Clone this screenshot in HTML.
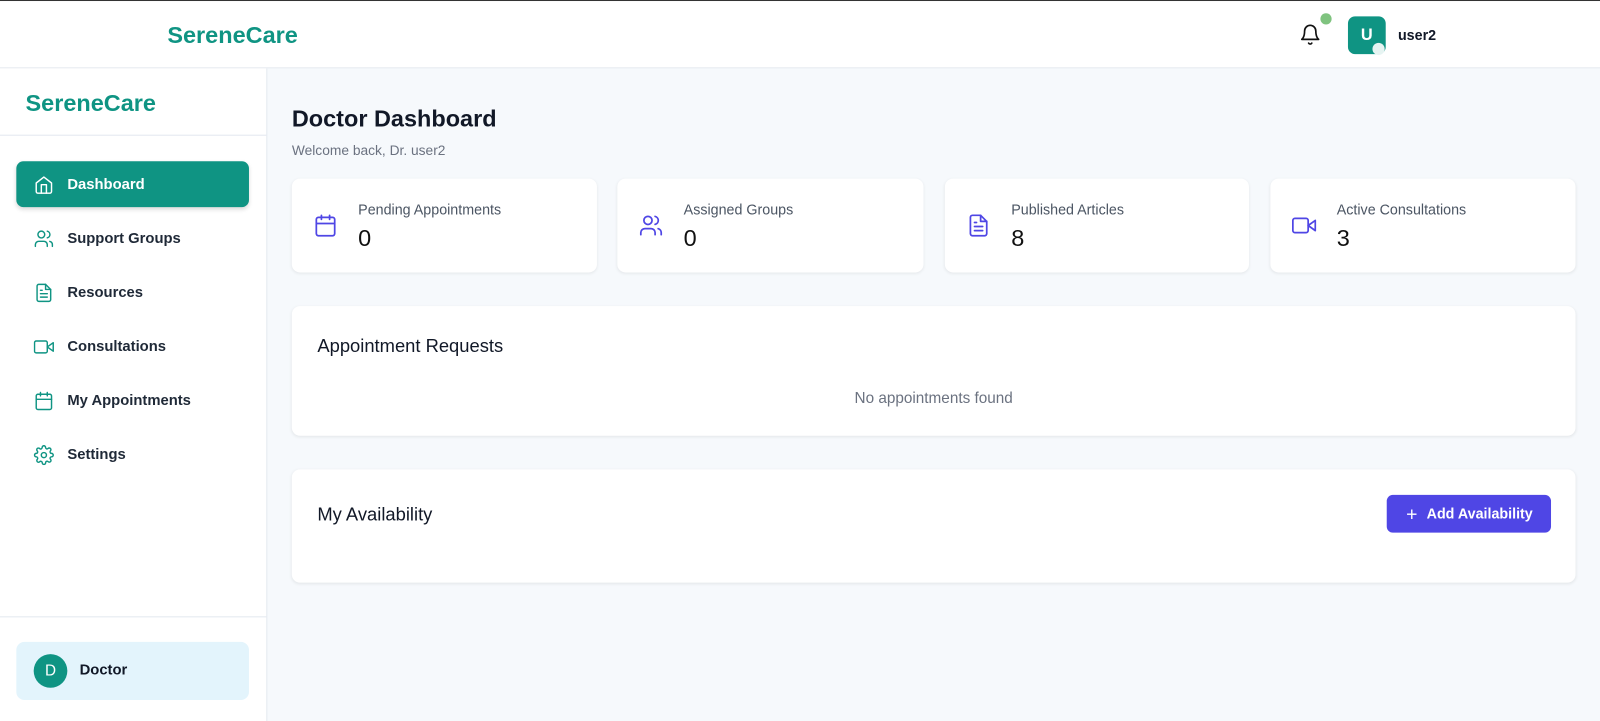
<!DOCTYPE html>
<html><head><meta charset="utf-8"><style>
*{box-sizing:border-box;margin:0;padding:0}
html,body{width:1600px;height:721px;overflow:hidden;background:#f6f9fc}
body{font-family:"Liberation Sans",sans-serif;color:#111827}
#w{position:absolute;left:0;top:0;width:1568px;height:707px;transform:scale(1.020408);transform-origin:0 0}
.top{position:absolute;left:0;top:0;width:1568px;height:67px;background:#fff;border-top:1px solid #333;border-bottom:1px solid #e3e8ef}
.logo{color:#0f9483;font-weight:bold;font-size:23px;position:absolute}
.side{position:absolute;left:0;top:67px;width:262px;height:640px;background:#fff;border-right:1px solid #e3e8ef}
.nav{position:absolute;left:16px;width:228px;height:45px;border-radius:7px;display:flex;align-items:center;padding-left:17px;font-size:14.5px;font-weight:bold;color:#1f2937}
.nav svg{width:20px;height:20px;margin-right:13px;fill:none;stroke:#0f9483;stroke-width:1.7;stroke-linecap:round;stroke-linejoin:round}
.nav.act{background:#0f9483;color:#fff;box-shadow:0 2px 4px rgba(0,0,0,.15)}
.nav.act svg{stroke:#fff}
.card{position:absolute;background:#fff;border-radius:8px;box-shadow:0 1px 3px rgba(0,0,0,.08)}
.stat{top:175px;height:92px;width:299px}
.stat svg{position:absolute;left:21px;top:34px;width:24px;height:24px;fill:none;stroke:#4f46e5;stroke-width:1.7;stroke-linecap:round;stroke-linejoin:round}
.stat .l{position:absolute;left:65px;top:22px;font-size:14px;color:#4b5563}
.stat .v{position:absolute;left:65px;top:45px;font-size:23px;color:#111}
h3{font-size:18px;font-weight:normal;color:#111827;position:absolute;left:25px}
</style></head><body><div id="w">
<div class="top">
<div class="logo" style="left:164px;top:20px">SereneCare</div>
<svg style="position:absolute;left:1273px;top:21px" width="22" height="24" viewBox="0 0 24 24" fill="none" stroke="#111" stroke-width="1.8" stroke-linecap="round" stroke-linejoin="round"><path d="M6 8a6 6 0 0 1 12 0c0 7 3 9 3 9H3s3-2 3-9"/><path d="M10.3 21a1.94 1.94 0 0 0 3.4 0"/></svg>
<div style="position:absolute;left:1294px;top:12px;width:11px;height:11px;border-radius:50%;background:#7fc37f"></div>
<div style="position:absolute;left:1321px;top:15px;width:37px;height:37px;border-radius:7px;background:#0f9483;color:#fff;font-weight:bold;font-size:16px;text-align:center;line-height:37px">U</div>
<div style="position:absolute;left:1345px;top:41px;width:12px;height:12px;border-radius:50%;background:#e6f4f2"></div>
<div style="position:absolute;left:1370px;top:25px;font-size:14px;font-weight:bold">user2</div>
</div>
<div class="side">
<div class="logo" style="left:25px;top:21px;font-size:23px">SereneCare</div>
<div style="position:absolute;left:0;top:65px;width:261px;border-top:1px solid #e3e8ef"></div>
<div class="nav act" style="top:91px"><svg viewBox="0 0 24 24"><path d="M3 10l9-7 9 7v10a2 2 0 0 1-2 2H5a2 2 0 0 1-2-2z"/><path d="M9 22V12h6v10"/></svg>Dashboard</div>
<div class="nav" style="top:144px"><svg viewBox="0 0 24 24"><path d="M16 21v-2a4 4 0 0 0-4-4H6a4 4 0 0 0-4 4v2"/><circle cx="9" cy="7" r="4"/><path d="M22 21v-2a4 4 0 0 0-3-3.9M16 3.1a4 4 0 0 1 0 7.8"/></svg>Support Groups</div>
<div class="nav" style="top:197px"><svg viewBox="0 0 24 24"><path d="M14 2H6a2 2 0 0 0-2 2v16a2 2 0 0 0 2 2h12a2 2 0 0 0 2-2V8z"/><path d="M14 2v6h6M16 13H8M16 17H8M10 9H8"/></svg>Resources</div>
<div class="nav" style="top:250px"><svg viewBox="0 0 24 24"><path d="M23 7l-7 5 7 5z"/><rect x="1" y="5" width="15" height="14" rx="2"/></svg>Consultations</div>
<div class="nav" style="top:303px"><svg viewBox="0 0 24 24"><rect x="3" y="4" width="18" height="18" rx="2"/><path d="M16 2v4M8 2v4M3 10h18"/></svg>My Appointments</div>
<div class="nav" style="top:356px"><svg viewBox="0 0 24 24"><circle cx="12" cy="12" r="3"/><path d="M19.4 15a1.65 1.65 0 0 0 .33 1.82l.06.06a2 2 0 1 1-2.830 2.83l-.06-.06a1.65 1.65 0 0 0-1.82-.33 1.65 1.65 0 0 0-1 1.51V21a2 2 0 0 1-4 0v-.09A1.65 1.65 0 0 0 9 19.4a1.65 1.65 0 0 0-1.82.33l-.06.06a2 2 0 1 1-2.83-2.83l.06-.06A1.65 1.65 0 0 0 4.6 15a1.65 1.65 0 0 0-1.51-1H3a2 2 0 0 1 0-4h.09A1.65 1.65 0 0 0 4.6 9a1.65 1.65 0 0 0-.33-1.82l-.06-.06a2 2 0 1 1 2.83-2.83l.06.06A1.65 1.65 0 0 0 9 4.6a1.65 1.65 0 0 0 1-1.51V3a2 2 0 0 1 4 0v.09a1.65 1.65 0 0 0 1 1.51 1.65 1.65 0 0 0 1.82-.33l.06-.06a2 2 0 1 1 2.83 2.83l-.06.06A1.65 1.65 0 0 0 19.4 9a1.65 1.65 0 0 0 1.51 1H21a2 2 0 0 1 0 4h-.09a1.65 1.65 0 0 0-1.51 1z"/></svg>Settings</div>
<div style="position:absolute;left:0;top:537px;width:261px;border-top:1px solid #e3e8ef"></div>
<div style="position:absolute;left:16px;top:562px;width:228px;height:57px;border-radius:8px;background:#e3f4fc">
<div style="position:absolute;left:17px;top:12px;width:33px;height:33px;border-radius:50%;background:#0f9483;color:#fff;text-align:center;line-height:33px;font-size:15px">D</div>
<div style="position:absolute;left:62px;top:20px;font-size:14.5px;font-weight:bold">Doctor</div>
</div>
</div>
<div style="position:absolute;left:286px;top:103px;font-size:23px;font-weight:bold">Doctor Dashboard</div>
<div style="position:absolute;left:286px;top:140px;font-size:13.5px;color:#6b7280">Welcome back, Dr. user2</div>
<div class="card stat" style="left:286px"><svg viewBox="0 0 24 24"><rect x="3" y="4" width="18" height="18" rx="2"/><path d="M16 2v4M8 2v4M3 10h18"/></svg><div class="l">Pending Appointments</div><div class="v">0</div></div>
<div class="card stat" style="left:605px;width:300px"><svg viewBox="0 0 24 24"><path d="M16 21v-2a4 4 0 0 0-4-4H6a4 4 0 0 0-4 4v2"/><circle cx="9" cy="7" r="4"/><path d="M22 21v-2a4 4 0 0 0-3-3.9M16 3.1a4 4 0 0 1 0 7.8"/></svg><div class="l">Assigned Groups</div><div class="v">0</div></div>
<div class="card stat" style="left:926px;width:298px"><svg viewBox="0 0 24 24"><path d="M14 2H6a2 2 0 0 0-2 2v16a2 2 0 0 0 2 2h12a2 2 0 0 0 2-2V8z"/><path d="M14 2v6h6M16 13H8M16 17H8M10 9H8"/></svg><div class="l">Published Articles</div><div class="v">8</div></div>
<div class="card stat" style="left:1245px"><svg viewBox="0 0 24 24"><path d="M23 7l-7 5 7 5z"/><rect x="1" y="5" width="15" height="14" rx="2"/></svg><div class="l">Active Consultations</div><div class="v">3</div></div>
<div class="card" style="left:286px;top:300px;width:1258px;height:127px">
<h3 style="top:29px">Appointment Requests</h3>
<div style="position:absolute;left:0;width:100%;top:82px;text-align:center;font-size:15px;color:#6b7280">No appointments found</div>
</div>
<div class="card" style="left:286px;top:460px;width:1258px;height:111px">
<h3 style="top:34px">My Availability</h3>
<div style="position:absolute;left:1073px;top:25px;width:161px;height:37px;border-radius:6px;background:#4f46e5;color:#fff;font-size:14px;font-weight:bold;line-height:37px;padding-left:19px"><span style="font-weight:normal;font-size:19px;vertical-align:-2px;margin-right:9px">+</span>Add Availability</div>
</div>
</div></body></html>
